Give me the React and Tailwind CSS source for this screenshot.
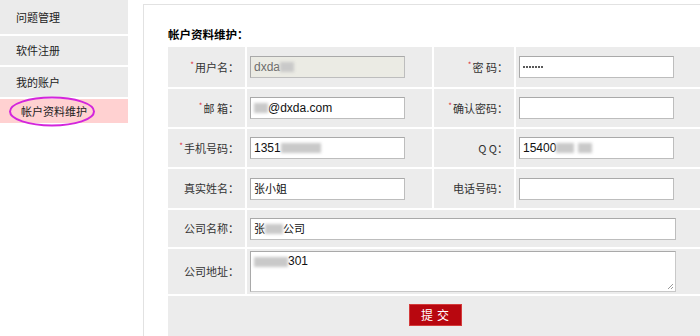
import React from 'react';

const font = { fontFamily: '"Noto Sans CJK SC", "Liberation Sans", sans-serif' };

function Blur({ w = 20 }) {
  return <span className="inline-block h-[10px] bg-[#c9c9c9] blur-[1.5px] align-middle" style={{ width: w }} />;
}

function Label({ children, req }) {
  return (
    <div className="bg-[#ececec] flex items-center justify-end pr-[6px] text-[11px] text-[#333]">
      {req && <span className="text-[#e0303a] text-[8px] mr-[1px] -mt-[4px]">*</span>}
      {children}
    </div>
  );
}

function Field({ children, w = 'w-[155px]', disabled, span }) {
  return (
    <div className={`bg-[#ececec] flex items-center pl-[3px] ${span ? 'col-span-3' : ''}`}>
      <div
        className={`${w} h-[22px] border border-[#bdbdbd] border-t-[#a9a9a9] border-l-[#a9a9a9] ${disabled ? 'bg-[#ebebe4] text-[#6d6d6d]' : 'bg-white text-[#111]'} flex items-center px-[3px] text-[12px] whitespace-nowrap`}
        style={{ fontFamily: '"Liberation Sans", "Noto Sans CJK SC", sans-serif' }}
      >
        {children}
      </div>
    </div>
  );
}

export default function App() {
  const menu = ['问题管理', '软件注册', '我的账户'];
  return (
    <div className="w-[700px] h-[336px] bg-white flex overflow-hidden" style={font}>
      {/* Sidebar */}
      <div className="w-[128px] shrink-0 flex flex-col gap-[2px]">
        <div className="h-[34px] bg-[#ebebeb] flex items-center pl-[16px] text-[11px] text-[#222]">{menu[0]}</div>
        <div className="h-[29px] bg-[#ebebeb] flex items-center pl-[16px] text-[11px] text-[#222]">{menu[1]}</div>
        <div className="h-[30px] bg-[#ebebeb] flex items-center pl-[16px] text-[11px] text-[#222]">{menu[2]}</div>
        <div className="relative h-[24px] bg-[#ffd1d1] flex items-center pl-[21px] text-[11px] text-[#222]">
          帐户资料维护
          <svg className="absolute left-[8px] -top-[3px]" width="88" height="31" viewBox="0 0 88 31">
            <ellipse cx="44" cy="15.5" rx="42" ry="14" fill="none" stroke="#d325dc" strokeWidth="2" />
          </svg>
        </div>
      </div>

      {/* Main panel */}
      <div className="ml-[15px] mt-[4px] flex-1 border-l border-t border-[#e2e2e2] pl-[24px] pt-[20px]">
        <div className="text-[11.5px] font-bold text-black h-[18px] leading-[18px] mb-[4px]">帐户资料维护：</div>
        <div className="grid grid-cols-[77px_185px_80px_1fr] grid-rows-[40px_38px_38px_39px_37px_45px_41px] gap-[2px] -mr-[2px]">
          <Label req>用户名：</Label>
          <Field disabled>dxda<Blur w={14} /></Field>
          <Label req>密 码：</Label>
          <Field>
            <span className="flex gap-[1px]">
              {[0, 1, 2, 3, 4, 5, 6].map((i) => (
                <span key={i} className="w-[2px] h-[2px] rounded-full bg-[#222]" />
              ))}
            </span>
          </Field>

          <Label req>邮 箱：</Label>
          <Field><Blur w={14} />@dxda.com</Field>
          <Label req>确认密码：</Label>
          <Field />

          <Label req>手机号码：</Label>
          <Field>1351<Blur w={40} /></Field>
          <Label>Q Q：</Label>
          <Field>15400<Blur w={18} /><span className="w-[4px]" /><Blur w={14} /></Field>

          <Label>真实姓名：</Label>
          <Field><span className="text-[11px]" style={font}>张小姐</span></Field>
          <Label>电话号码：</Label>
          <Field />

          <Label>公司名称：</Label>
          <Field span w="w-[426px]"><span className="text-[11px]" style={font}>张</span><Blur w={18} /><span className="text-[11px]" style={font}>公司</span></Field>

          <Label>公司地址：</Label>
          <div className="col-span-3 bg-[#ececec] flex items-center pl-[3px]">
            <div className="relative w-[426px] h-[41px] bg-white border border-[#a9a9a9] border-r-[#c8c8c8] border-b-[#c8c8c8] px-[3px] pt-[2px] text-[12px] text-[#111] leading-[14px]" style={{ fontFamily: '"Liberation Sans", sans-serif' }}>
              <Blur w={34} />301
              <svg className="absolute right-[1px] bottom-[1px]" width="8" height="8" viewBox="0 0 8 8">
                <path d="M7 2 L2 7 M7 5 L5 7" stroke="#9a9a9a" strokeWidth="1" />
              </svg>
            </div>
          </div>

          <div className="col-span-4 bg-[#ececec] flex items-start justify-center pt-[8px]">
            <button className="w-[53px] h-[22px] bg-[#b8070f] text-white text-[12px] tracking-[4px] pl-[4px] border border-[#d43b3b]">提交</button>
          </div>
        </div>
      </div>
    </div>
  );
}
